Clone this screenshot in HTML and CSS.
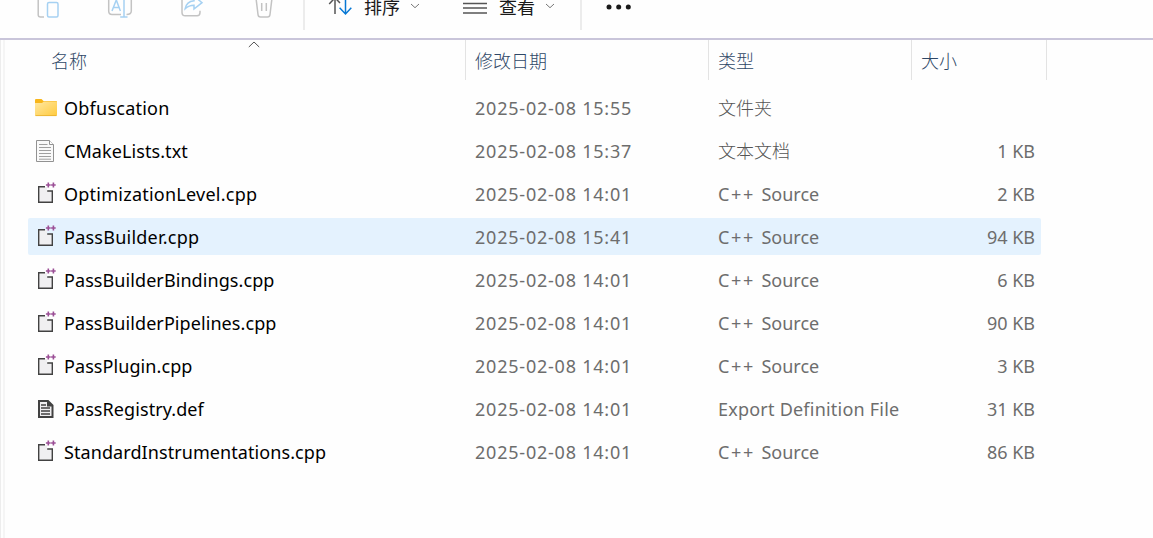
FILE: index.html
```
<!DOCTYPE html>
<html lang="zh-CN">
<head>
<meta charset="utf-8">
<title>文件资源管理器</title>
<link rel="stylesheet" href="styles.css">
</head>
<body>
<svg class="defs" aria-hidden="true">
  <linearGradient id="folder-fill" x1="0" y1="0" x2="1" y2="1"><stop offset="0" stop-color="#ffe8a3"/><stop offset="1" stop-color="#ffca3d"/></linearGradient>
  <symbol id="cpp" viewBox="0 0 24 24">
    <path d="M5 5H13V9H18V20H5Z" fill="#f0eff1"/>
    <path d="M11 4.7H4.7V20.3H18.3V9H13.2" fill="none" stroke="#424242" stroke-width="1.4"/>
    <path d="M11.9 3h4.8M14.3 .6v4.8M17.1 3h4.6M19.4 .6v4.8" fill="none" stroke="#9b4f96" stroke-width="1.6"/>
  </symbol>
</svg>
<header class="toolbar">
  <svg class="tool copy" viewBox="0 0 24 24"><path d="M8 23H4.5Q2.2 23 2.2 20.7V2" stroke="#c3c3c3"/><rect x="11.5" y="8.5" width="10.5" height="14.5" rx="1.5" stroke="#a6d1f2"/></svg>
  <svg class="tool rename" viewBox="0 0 26 24"><path d="M14 20.5H5Q1.7 20.5 1.7 17V5M19.5 20.5Q24.3 20.5 24.3 17V5" stroke="#c3c3c3"/><path d="M5 17L9.3 6L13.4 17M6.5 13.5H12M17 4V23M13.2 23H20.5" stroke="#a6d1f2"/></svg>
  <svg class="tool share" viewBox="0 0 26 24"><path d="M3 4V18.5Q3 21.8 6.3 21.8H18Q21 21.8 21 18.5V16.8" stroke="#c3c3c3"/><path d="M15 4V6.8Q7.5 7.5 6.2 14.7Q10 11.2 15 11.2V15L23 8.7L15 2" stroke="#a6d1f2"/></svg>
  <svg class="tool trash" viewBox="0 0 24 24"><path d="M4 4L6 20.5Q6.2 23 8.5 23H15.5Q17.8 23 18 20.5L20 4M9.7 9V17M14.3 9V17" stroke="#c3c3c3"/></svg>
  <i class="divider first"></i>
  <svg class="sort" viewBox="0 0 24 24"><path d="M7 22V5M1.2 12L7 5.8L12 11" stroke="#555"/><path d="M17.5 5V22M11.6 15.8L17.5 22L23.3 15.8" stroke="#0878d4"/></svg>
  <span class="command">排序</span>
  <svg class="chevron" viewBox="0 0 10 6"><path d="M1 1L5 4.7L9 1"/></svg>
  <svg class="lines" viewBox="0 0 24 12"><path d="M0 1.5H24M0 6H24M0 11H24"/></svg>
  <span class="command">查看</span>
  <svg class="chevron" viewBox="0 0 10 6"><path d="M1 1L5 4.7L9 1"/></svg>
  <i class="divider second"></i>
  <svg class="more" viewBox="0 0 26 6"><circle cx="3" cy="3" r="2.5"/><circle cx="12.7" cy="3" r="2.5"/><circle cx="22.3" cy="3" r="2.5"/></svg>
</header>
<main class="pane">
  <div class="columns">
    <div class="heading name-heading">名称<svg class="ascending" viewBox="0 0 12 7"><path d="M.8 6L6 1L11.2 6"/></svg></div>
    <div class="heading">修改日期</div>
    <div class="heading">类型</div>
    <div class="heading">大小</div>
  </div>
  <div class="files">
    <div class="row"><svg class="icon" viewBox="0 0 24 24"><path d="M1 4Q1 3 2 3H7.5L9.5 5H22Q23 5 23 6V12H1Z" fill="#f8b61b"/><path d="M1 7H8L9.8 5.5H22Q23 5.5 23 6.5V18.5Q23 20 22 20H2Q1 20 1 19Z" fill="url(#folder-fill)"/><path d="M1.5 19.6H22.5" stroke="#e7ad2b" stroke-width=".8"/></svg><span class="name loose">Obfuscation</span><span class="date">2025-02-08 15:55</span><span class="type cjk">文件夹</span><span class="size"></span></div>
    <div class="row"><svg class="icon" viewBox="0 0 24 24"><path d="M2.5 1.5H15.5L19.5 5.5V22.5H2.5Z" fill="#fafafa" stroke="#929292"/><path d="M15.5 1.5V5.5H19.5" fill="#fff" stroke="#929292"/><path d="M5 5.5H13.5M5 8.5H17M5 11.5H17M5 14.5H17M5 17.5H17M5 20.2H17" stroke="#a0a0a0"/></svg><span class="name">CMakeLists.txt</span><span class="date">2025-02-08 15:37</span><span class="type cjk">文本文档</span><span class="size">1 KB</span></div>
    <div class="row"><svg class="icon"><use href="#cpp"/></svg><span class="name loose">OptimizationLevel.cpp</span><span class="date">2025-02-08 14:01</span><span class="type"><span class="lang">C++ </span>Source</span><span class="size">2 KB</span></div>
    <div class="row selected"><svg class="icon"><use href="#cpp"/></svg><span class="name loose">PassBuilder.cpp</span><span class="date">2025-02-08 15:41</span><span class="type"><span class="lang">C++ </span>Source</span><span class="size">94 KB</span></div>
    <div class="row"><svg class="icon"><use href="#cpp"/></svg><span class="name">PassBuilderBindings.cpp</span><span class="date">2025-02-08 14:01</span><span class="type"><span class="lang">C++ </span>Source</span><span class="size">6 KB</span></div>
    <div class="row"><svg class="icon"><use href="#cpp"/></svg><span class="name">PassBuilderPipelines.cpp</span><span class="date">2025-02-08 14:01</span><span class="type"><span class="lang">C++ </span>Source</span><span class="size">90 KB</span></div>
    <div class="row"><svg class="icon"><use href="#cpp"/></svg><span class="name">PassPlugin.cpp</span><span class="date">2025-02-08 14:01</span><span class="type"><span class="lang">C++ </span>Source</span><span class="size">3 KB</span></div>
    <div class="row"><svg class="icon" viewBox="0 0 24 24"><path d="M5 4H14L18.5 8.5V20H5Z" fill="#f0eff1" stroke="#424242" stroke-width="2"/><path d="M13 3.5L19 9.5H13Z" fill="#424242"/><path d="M7 8H12M7 11H16M7 14H16M7 17H16" stroke="#424242" stroke-width="1.5"/></svg><span class="name">PassRegistry.def</span><span class="date">2025-02-08 14:01</span><span class="type export">Export Definition File</span><span class="size">31 KB</span></div>
    <div class="row"><svg class="icon"><use href="#cpp"/></svg><span class="name">StandardInstrumentations.cpp</span><span class="date">2025-02-08 14:01</span><span class="type"><span class="lang">C++ </span>Source</span><span class="size">86 KB</span></div>
  </div>
</main>
</body>
</html>
```
FILE: styles.css
```
* { box-sizing: border-box; }
body { margin: 0; height: 538px; overflow: hidden; background: #fefefe; color: #000; font: 18px/24px "Noto Sans", "Noto Sans CJK SC", sans-serif; }
svg { display: block; flex: none; fill: none; }
.defs { position: absolute; width: 0; height: 0; }
.toolbar { display: flex; align-items: flex-start; height: 40px; border-bottom: 2px solid #c9c5da; overflow: hidden; }
.tool { width: 24px; height: 24px; margin-top: -6px; stroke-width: 1.5; }
.copy { margin-left: 36px; }
.rename { width: 26px; margin-left: 47px; }
.share { width: 26px; margin-left: 46px; }
.trash { margin-left: 47px; }
.divider { flex: none; width: 2px; height: 30px; background: #ececec; }
.first { margin-left: 27px; }
.second { margin-left: 25px; }
.sort { width: 24px; height: 24px; margin: -8px 0 0 23px; stroke-width: 1.5; }
.command { width: 36px; margin: -6px 0 0 12px; font-family: "Noto Sans CJK SC", sans-serif; color: #1a1a1a; white-space: nowrap; }
.chevron { width: 10px; height: 6px; margin: 3px 0 0 10px; stroke: #777; }
.lines { width: 24px; height: 12px; margin: 2px 0 0 43px; stroke: #555; stroke-width: 1.3; }
.more { width: 26px; height: 6px; margin: 4px 0 0 24px; fill: #1a1a1a; }
.pane { height: 498px; border-left: 1px solid #ededed; padding-left: 2px; box-shadow: inset 2px 0 #fefefe, inset 4px 0 #f5f5f5; }
.columns { display: grid; grid-template-columns: 463px 243px 203px 135px; height: 40px; }
.heading { position: relative; padding: 8px 0 0 9px; border-right: 1px solid #e3e3e3; color: #2f4766; font-family: "Noto Sans CJK SC", sans-serif; font-weight: 300; }
.name-heading { padding-left: 48px; }
.ascending { position: absolute; left: 245px; top: 1px; width: 12px; height: 7px; stroke: #555; }
.files { display: flex; flex-direction: column; gap: 6px; padding: 9px 0 0 25px; }
.row { display: grid; grid-template-columns: 36px 411px 243px 203px 114px 6px; align-items: center; width: 1013px; height: 37px; border-radius: 2px; white-space: nowrap; }
.selected { background: #e4f2fe; }
.icon { width: 24px; height: 24px; margin-left: 6px; }
.name { letter-spacing: .08px; }
.loose { letter-spacing: .24px; }
.date, .type, .size { color: #6d6d6d; }
.date { letter-spacing: .78px; }
.lang { letter-spacing: 1.7px; }
.export { letter-spacing: .22px; }
.cjk { padding-bottom: 2px; color: #555; font-family: "Noto Sans CJK SC", sans-serif; font-weight: 300; }
.size { text-align: right; }
```
